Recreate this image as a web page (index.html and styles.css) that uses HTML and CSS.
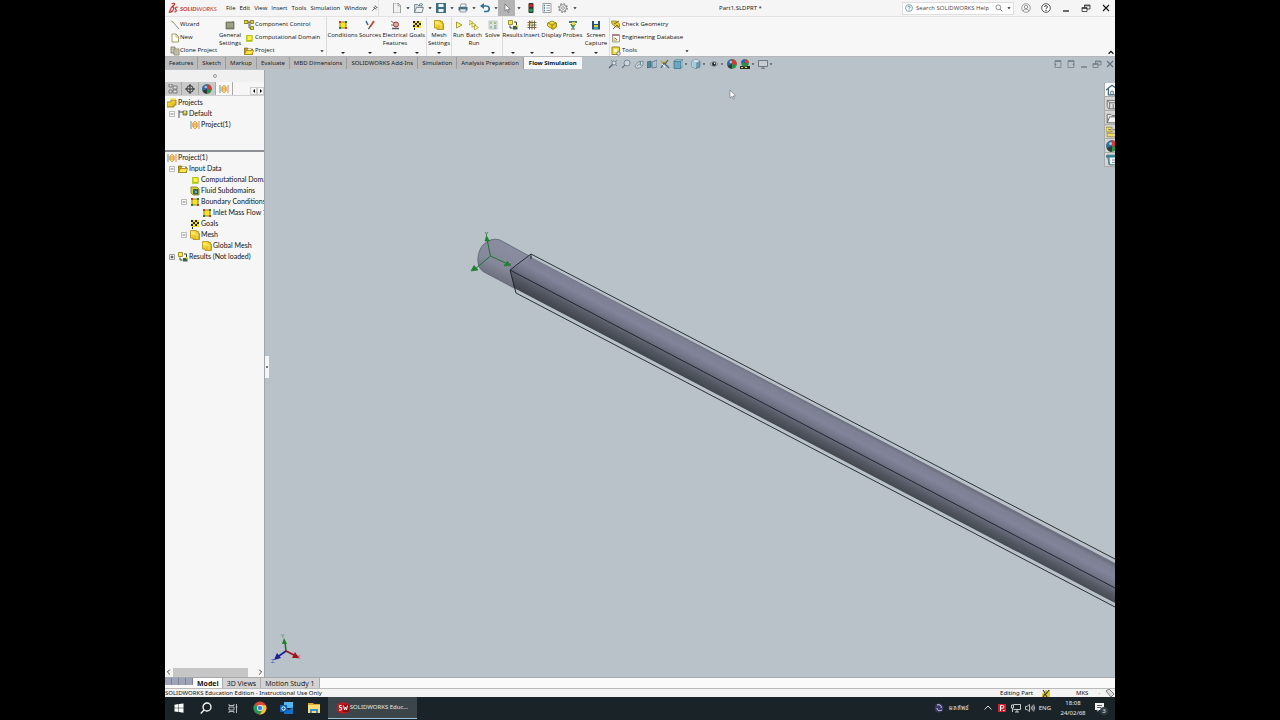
FILE: index.html
```html
<!DOCTYPE html>
<html lang="en">
<head>
<meta charset="utf-8">
<title>Part1.SLDPRT - SOLIDWORKS</title>
<link rel="stylesheet" href="styles.css">
</head>
<body>
<svg class="sprite" aria-hidden="true">
  <defs>
    <linearGradient id="gold" x1="0" y1="0" x2="1" y2="1"><stop offset="0" stop-color="#fff04a"/><stop offset="1" stop-color="#d9a90c"/></linearGradient>
    <linearGradient id="tube" gradientUnits="userSpaceOnUse" x1="800" y1="398" x2="783" y2="430">
      <stop offset="0" stop-color="#6d7080"/><stop offset=".08" stop-color="#7d7f92"/><stop offset=".3" stop-color="#82849a"/><stop offset=".5" stop-color="#727587"/><stop offset=".75" stop-color="#545863"/><stop offset="1" stop-color="#41454d"/>
    </linearGradient>
    <linearGradient id="cap" gradientUnits="userSpaceOnUse" x1="498" y1="240" x2="482" y2="274">
      <stop offset="0" stop-color="#8a8d9f"/><stop offset=".6" stop-color="#85889a"/><stop offset="1" stop-color="#696d7b"/>
    </linearGradient>
  </defs>
  <symbol id="caret" viewBox="0 0 10 10"><path d="M3 4h4L5 6.500z" fill="#222"/></symbol>
  <symbol id="wand" viewBox="0 0 10 10"><path d="M2 1l7 8" stroke="#8b8c7c" stroke-width="1"/><path d="M1 1l2 1" stroke="#c6bd50"/></symbol>
  <symbol id="page" viewBox="0 0 10 10"><path d="M2 1h4l2.500 2.500V9H2z" fill="#fffff0" stroke="#8a8750" stroke-width=".8"/><path d="M6 1v3h2.500" fill="none" stroke="#8a8750" stroke-width=".6"/></symbol>
  <symbol id="clone" viewBox="0 0 10 10"><path d="M1 1h4v6H1z" fill="#c9c9b4" stroke="#77775c" stroke-width=".8"/><path d="M4 3h5v6H4z" fill="#dcdcc8" stroke="#77775c" stroke-width=".8"/><path d="M5 5h3M5 7h3" stroke="#77775c" stroke-width=".6"/></symbol>
  <symbol id="settings" viewBox="0 0 10 10"><path d="M1 2h8v7H1z" fill="#8b8e70" stroke="#5c5e50" stroke-width=".7"/><path d="M2 4h6M2 6h6" stroke="#c3c4ac" stroke-width=".7"/><path d="M6 2l3-1v2z" fill="#777"/></symbol>
  <symbol id="branch" viewBox="0 0 10 10"><path d="M2 2h4M5 2v6h2M5 5h2" fill="none" stroke="#444" stroke-width=".8"/><path d="M0 .5h4v3H0zM6.500 .5h3v3h-3zM6.500 6.500h3v3h-3z" fill="#e2cd29" stroke="#655d19" stroke-width=".7"/></symbol>
  <symbol id="cube" viewBox="0 0 10 10"><path d="M2 2h6.500v7H2z" fill="#b5d93c"/><path d="M3 2.500h5v5H3z" fill="#fff23e" stroke="#b2b41d" stroke-width=".9"/></symbol>
  <symbol id="folder" viewBox="0 0 10 10"><path d="M.5 8.500V2h3l1 1h4v5.500z" fill="#c99c17" stroke="#77610f" stroke-width=".7"/><path d="M.5 8.500L2.500 4.500h7.200L8 8.500z" fill="#ffe347" stroke="#8e740c" stroke-width=".6"/><path d="M4 3.500h3" stroke="#fff"/></symbol>
  <symbol id="bound" viewBox="0 0 10 10"><path d="M2 2h6v6H2z" fill="#f8e329" stroke="#8a861b"/><path d="M1 1h2v2H1zM7 7h2v2H7z" fill="#c8391d"/><path d="M7 1h2v2H7zM1 7h2v2H1z" fill="#34762e"/></symbol>
  <symbol id="brush" viewBox="0 0 10 10"><path d="M9 1L5 7" stroke="#c44a2a" stroke-width="1.800"/><path d="M1 1l2 4" stroke="#3868a8" stroke-width="1.500"/><path d="M6 5L4 9.500l-1-1z" fill="#333"/></symbol>
  <symbol id="electric" viewBox="0 0 10 10"><path d="M1 1l3 2M1 5h3" stroke="#7f6c65"/><circle cx="6" cy="4.500" r="2.500" fill="#d7b0a2" stroke="#a33a2e"/><path d="M2 8.500h7" stroke="#5a5a63" stroke-width="1.500"/></symbol>
  <symbol id="flag" viewBox="0 0 10 10"><path d="M1 1h8v7H3v2H2z" fill="#f3dc22"/><path d="M1 1h2v2H1zM5 1h2v2H5zM3 3h2v2H3zM7 3h2v2H7zM1 5h2v2H1zM5 5h2v2H5zM2 8h1v2H2z" fill="#24261f"/></symbol>
  <symbol id="mesh" viewBox="0 0 10 10"><path d="M.5 .5h6v1h2v2h1v6H3V8H.5z" fill="url(#gold)" stroke="#ac8c12" stroke-width=".8"/><path d="M3 4h4v5M1 3h4" fill="none" stroke="#fff38b" stroke-width=".8"/></symbol>
  <symbol id="play" viewBox="0 0 10 10"><path d="M2.500 2v6L8 5z" fill="#fff66b" stroke="#9b972b" stroke-width=".9"/></symbol>
  <symbol id="batch" viewBox="0 0 10 10"><path d="M0 0v5l4-2.500zM3 2.500v5L7 5zM5.500 5v5l4-2.500z" fill="#fff98b" stroke="#a8a23c" stroke-width=".8"/></symbol>
  <symbol id="calc" viewBox="0 0 10 10"><path d="M1 1h8v8H1z" fill="#dde5df" stroke="#a2b1aa" stroke-width=".6"/><path d="M2 3h2M6 3h2M2 7h2M6 6h2M6 8h2" stroke="#6a9187"/><path d="M6 3h2" stroke="#c5b63b"/></symbol>
  <symbol id="results" viewBox="0 0 10 10"><path d="M.5 .5h4v4h-4z" fill="#ffe746" stroke="#87801d" stroke-width=".8"/><path d="M6 2h2.500v3M2 5.500V8h2.500" fill="none" stroke="#3b443c" stroke-width="1"/><path d="M5 6h4.500v3.500H5z" fill="#326647"/><path d="M7 5h2.500v3z" fill="#ead226"/></symbol>
  <symbol id="gridicon" viewBox="0 0 10 10"><path d="M2.500 .5v9M5 .5v9M7.500 .5v9M.5 2.500h9M.5 5h9M.5 7.500h9" stroke="#59613d" stroke-width=".9"/><path d="M3 3h2v2H3z" fill="#e4cc31"/><path d="M2 2h2M6 7.500h2" stroke="#ba4c2b"/></symbol>
  <symbol id="display" viewBox="0 0 10 10"><path d="M.5 3L5 1l4.500 2v4L6 9.500.5 6z" fill="url(#gold)" stroke="#7b841b" stroke-width=".8"/><path d="M1 3l4 2 4-2M5 5v4" fill="none" stroke="#766c18" stroke-width=".7"/></symbol>
  <symbol id="probe" viewBox="0 0 10 10"><path d="M1 1h8v2H1z" fill="#427f84"/><path d="M2 4h6L5 9z" fill="#46985a"/><path d="M4 2h3v3H4z" fill="#ead74f"/><path d="M3 9h4" stroke="#4d695a"/></symbol>
  <symbol id="floppy" viewBox="0 0 10 10"><path d="M0 0h10v10H0z" fill="#3d6e88"/><path d="M2.500 1h5v3h-5zM2.500 6h5v3h-5z" fill="#eef3f5"/></symbol>
  <symbol id="capture" viewBox="0 0 10 10"><path d="M1 1h8v8.500H1z" fill="#2a4f71"/><path d="M3 1h4v3H3z" fill="#edf4f7"/><path d="M3 5h4v2H3z" fill="#e9cc34"/><path d="M3 7h4v2H3z" fill="#3f9ec2"/></symbol>
  <symbol id="check" viewBox="0 0 10 10"><path d="M.5 1h5l3 3v3H5L1 4z" fill="#e5cf28" stroke="#7b7628" stroke-width=".7"/><path d="M2 9l4-4 3 4M3 4l5-3" fill="none" stroke="#8f5930" stroke-width="1"/></symbol>
  <symbol id="engdb" viewBox="0 0 10 10"><path d="M1.500 2h7v7h-7z" fill="#fff" stroke="#8a8888" stroke-width=".8"/><path d="M1 1h7.500v2H1z" fill="#a6848a"/><path d="M3 4v4h3" fill="none" stroke="#b9ae2c"/><path d="M4 5l2 2" stroke="#cc4e41"/></symbol>
  <symbol id="tools" viewBox="0 0 10 10"><path d="M1 1h7.500v7.500H1z" fill="#f2df43" stroke="#877a1f" stroke-width=".9"/><path d="M3 3h3v3H3z" fill="#fffbb1"/><circle cx="7.500" cy="7.500" r="1.800" fill="#dcdce0" stroke="#675e80" stroke-width=".7"/></symbol>
  <symbol id="doc" viewBox="0 0 10 10"><path d="M1.500 0h4.500l2.500 2.500V10H1.500z" fill="#f1f1f1" stroke="#7d7f80" stroke-width=".7"/><path d="M6 0v3h2.500" fill="none" stroke="#7d7f80" stroke-width=".6"/></symbol>
  <symbol id="open" viewBox="0 0 10 10"><path d="M.5 9V1.500h3l1 1h3.500V9z" fill="#d6dade" stroke="#596b77" stroke-width=".7"/><path d="M.5 9.500l2-5h7L8 9.500z" fill="#eceeef" stroke="#596b77" stroke-width=".7"/><path d="M5 3c0-3 3-3 4-1" fill="none" stroke="#367c93"/></symbol>
  <symbol id="printer" viewBox="0 0 10 10"><path d="M3 1h5v3H2z" fill="#fff" stroke="#657481" stroke-width=".7"/><path d="M.5 4h9v3.500h-9z" fill="#486d82"/><path d="M2 6h6v3H2z" fill="#e4e9ec" stroke="#61727d" stroke-width=".6"/></symbol>
  <symbol id="undo" viewBox="0 0 10 10"><path d="M2 3h4.500a2.700 2.700 0 0 1 0 5.500H4" fill="none" stroke="#2f7397" stroke-width="1.700"/><path d="M4 0v6L0 3z" fill="#2f7397"/></symbol>
  <symbol id="pointer" viewBox="0 0 10 10"><path d="M3 1v7l1.700-1.500L6 9.500l1-.5-1.200-2.700H8z" fill="#fff" stroke="#54585e" stroke-width=".6"/></symbol>
  <symbol id="traffic" viewBox="0 0 10 10"><rect x="2.500" width="5" height="10" rx="1" fill="#2e3532"/><circle cx="5" cy="2.500" r="1.700" fill="#df2822"/><circle cx="5" cy="7.300" r="1.700" fill="#23a34c"/></symbol>
  <symbol id="list" viewBox="0 0 10 10"><path d="M1 .5h8v9H1z" fill="#fff" stroke="#6f777d" stroke-width=".7"/><path d="M2 2.500h1M2 5h1M2 7.500h1" stroke="#2c7894" stroke-width="1.400"/><path d="M4.500 2.500H8M4.500 5H8M4.500 7.500H8" stroke="#8a929a" stroke-width=".9"/></symbol>
  <symbol id="gear" viewBox="0 0 10 10"><circle cx="5" cy="5" r="4.200" fill="none" stroke="#858585" stroke-width="1.400" stroke-dasharray="1.700 1.600"/><circle cx="5" cy="5" r="3.400" fill="#f5f5f5" stroke="#777" stroke-width=".8"/><circle cx="5" cy="5" r="1.400" fill="none" stroke="#777" stroke-width=".7"/></symbol>
  <symbol id="pin" viewBox="0 0 10 10"><path d="M5 2l3 3M1.500 8.500L5 5M3 3.500L6.500 7M4 4.500L6 2.500M5.500 6L7.500 4" stroke="#4d4d4d" stroke-width="1" fill="none"/></symbol>
  <symbol id="lens" viewBox="0 0 10 10"><circle cx="4.200" cy="4.200" r="3" fill="none" stroke="#555" stroke-width=".8"/><path d="M6.500 6.500L9 9" stroke="#555" stroke-width=".9"/></symbol>
  <symbol id="qmark" viewBox="0 0 10 10"><circle cx="5" cy="5" r="4.300" fill="#fff" stroke="currentColor" stroke-width=".7"/><path d="M3.700 4a1.300 1.300 0 1 1 2 1c-.7.500-.7.600-.7 1.300M5 7v1" fill="none" stroke="currentColor" stroke-width=".9"/></symbol>
  <symbol id="user" viewBox="0 0 10 10"><circle cx="5" cy="5" r="4.300" fill="none" stroke="#777" stroke-width=".7"/><circle cx="5" cy="4" r="1.700" fill="none" stroke="#777" stroke-width=".7"/><path d="M2 8c1-2.500 5-2.500 6 0" fill="none" stroke="#777" stroke-width=".7"/></symbol>
  <symbol id="min" viewBox="0 0 10 10"><path d="M2 8h6" stroke="currentColor" stroke-width="1.200"/></symbol>
  <symbol id="restore" viewBox="0 0 10 10"><path d="M1 4.500h5v4H1zM3.500 4.500V2H9v4H6M1 5.500h5M3.500 2.800H9" fill="none" stroke="currentColor" stroke-width=".7"/></symbol>
  <symbol id="close" viewBox="0 0 10 10"><path d="M2 2l6 6M8 2L2 8" stroke="currentColor" stroke-width="1.100"/></symbol>
  <symbol id="pane-l" viewBox="0 0 10 10"><path d="M2 2h6v6.500H2z" fill="none" stroke="#6d757e" stroke-width=".7"/><path d="M2 2h6" stroke="#6d757e" stroke-width="1.300"/><path d="M2 4v3l1.500-1.500z" fill="#6d757e"/></symbol>
  <symbol id="pane-r" viewBox="0 0 10 10"><path d="M2 2h6v6.500H2z" fill="none" stroke="#6d757e" stroke-width=".7"/><path d="M2 2h6" stroke="#6d757e" stroke-width="1.300"/><path d="M8 4v3L6.500 5.500z" fill="#6d757e"/></symbol>
  <symbol id="zoomfit" viewBox="0 0 10 10"><circle cx="6" cy="4" r="2" fill="#dbe4ec" stroke="#5b6f84" stroke-width=".8"/><path d="M4.500 5.500L1 9" stroke="#48627a" stroke-width="1.200"/><path d="M3 1l1 1M9 1L8 2M9 7L8 6" fill="none" stroke="#637180" stroke-width=".8"/></symbol>
  <symbol id="zoomarea" viewBox="0 0 10 10"><circle cx="6" cy="4" r="3" fill="#ccd6df" stroke="#6a7886" stroke-width=".8"/><path d="M4 6L1 9" stroke="#6a7886" stroke-width="1.200"/></symbol>
  <symbol id="prev" viewBox="0 0 10 10"><path d="M1 7l3-4 5-1v4L6 9H2z" fill="#d3d9dc" stroke="#637880" stroke-width=".7"/><path d="M3 7l4-3M6 2l1 5" stroke="#56878f" stroke-width=".9"/></symbol>
  <symbol id="section" viewBox="0 0 10 10"><path d="M0 3l4-1v6l-4 1z" fill="#51889a" stroke="#36586a" stroke-width=".6"/><path d="M5 3l5-2v7l-5 1z" fill="#a8c3ce" stroke="#36586a" stroke-width=".6"/></symbol>
  <symbol id="dynamic" viewBox="0 0 10 10"><path d="M0 1l4 2 3-2v4H2z" fill="#d2a844"/><path d="M1 9l3-5 5 5M8 1L5 5l4 4" fill="none" stroke="#3d6986" stroke-width="1.200"/><path d="M2 5l3 3" stroke="#fff"/></symbol>
  <symbol id="orient" viewBox="0 0 10 10"><path d="M1 2h7v7.500H1z" fill="#68a9bf" stroke="#316c84" stroke-width=".7"/><path d="M1 2l2-1.500h7L8 2zM8 2l2-1.500V7L8 9z" fill="#b4d1dc" stroke="#4a7788" stroke-width=".5"/></symbol>
  <symbol id="shaded" viewBox="0 0 10 10"><path d="M1 2l4-1.500L9 2v6L5 9.500 1 8z" fill="#6e9fb2" stroke="#42626f" stroke-width=".6"/><path d="M1 2l4 1.500L9 2 5 .5z" fill="#d4e5ec"/><path d="M5 3.500v6L1 8V2z" fill="#a7cbd8"/></symbol>
  <symbol id="eye" viewBox="0 0 10 10"><path d="M1 5c2-3 6-3 8 0-2 3-6 3-8 0z" fill="#b8c1c8" stroke="#6a7179" stroke-width=".7"/><circle cx="5" cy="5" r="2" fill="#262d35"/><circle cx="5.500" cy="4.200" r=".7" fill="#fff"/></symbol>
  <symbol id="ball" viewBox="0 0 10 10"><circle cx="5" cy="5" r="4.800" fill="#2b9048"/><path d="M5 5V.2A4.800 4.800 0 0 0 .5 6.800z" fill="#3169aa"/><path d="M5 5V.2a4.800 4.800 0 0 1 4.700 5.700z" fill="#cf3d35"/><path d="M5 5L.5 6.800A4.800 4.800 0 0 0 5 9.800z" fill="#34373b"/><circle cx="3.800" cy="3" r="1.300" fill="#fff" opacity=".6"/></symbol>
  <symbol id="scene" viewBox="0 0 10 10"><path d="M0 7h10v3H0z" fill="#252a27"/><path d="M1 8h2v1H1zM5 8h2v1H5z" fill="#efe24a"/><circle cx="5" cy="4" r="3.800" fill="#328c4b"/><path d="M5 4V.2A3.800 3.800 0 0 1 8.800 4z" fill="#d04438"/><path d="M5 4V.2A3.800 3.800 0 0 0 1.200 4z" fill="#3262a0"/></symbol>
  <symbol id="monitor" viewBox="0 0 10 10"><path d="M.5 1.500h9v6h-9zM3 9.300h4M5 7.500v2" fill="#c5ccd2" stroke="currentColor" stroke-width=".8"/></symbol>
  <symbol id="home" viewBox="0 0 10 10"><path d="M0 5l5-4 5 4M2 4v5h6V4" fill="#fff" stroke="#3a6573" stroke-width="1"/><path d="M4 9V6h2v3" fill="none" stroke="#3a6573" stroke-width=".7"/></symbol>
  <symbol id="library" viewBox="0 0 10 10"><path d="M1 2h7l1 2v5H2L1 7zM1 2l2 2h6M3 4v5M6 5v4" fill="#ddd" stroke="#666" stroke-width=".7"/></symbol>
  <symbol id="explore" viewBox="0 0 10 10"><path d="M1 9V2h3l1 1h4v6zM1 9l2-5h7" fill="#f4f4f4" stroke="#666" stroke-width=".8"/></symbol>
  <symbol id="palette" viewBox="0 0 10 10"><path d="M0 1h5v4H0zM1 6h8v3H1z" fill="#efdc62" stroke="#8d8347" stroke-width=".7"/><path d="M6 3h4M2 3h2" stroke="#777"/></symbol>
  <symbol id="props" viewBox="0 0 10 10"><path d="M1 1h9v8H3z" fill="#eff4f5" stroke="#377184" stroke-width=".8"/><path d="M0 1h10v2H0zM2 3h1v6H2z" fill="#377f95"/><path d="M5 5h4M5 7h4" stroke="#69808a" stroke-width=".7"/></symbol>
  <symbol id="ftree" viewBox="0 0 10 10"><path d="M1 0h3v3H1zM5 2h4v3H5zM1 6h3v3H1zM5 6h4v3H5z" fill="#dcdcdc" stroke="#666" stroke-width=".8"/></symbol>
  <symbol id="target" viewBox="0 0 10 10"><circle cx="5" cy="5" r="3.300" fill="none" stroke="#222" stroke-width=".9"/><path d="M5 0v10M0 5h10" stroke="#222" stroke-width=".9"/></symbol>
  <symbol id="flow" viewBox="0 0 10 10"><path d="M1 1v8" stroke="#79a9a3" stroke-width="1.200"/><path d="M9 1v8" stroke="#df9d76" stroke-width="1.200"/><path d="M3 3l2-2 2 2v4L5 9 3 7z" fill="#ffe268" stroke="#cf9839" stroke-width=".8"/><path d="M2 4h6M2 6h6" stroke="#d97f55" stroke-width=".7"/></symbol>
  <symbol id="projects" viewBox="0 0 10 10"><path d="M0 4h4V2h5v5H7v2H0z" fill="url(#gold)" stroke="#94791a" stroke-width=".8"/><path d="M3 1h6" stroke="#f7e33b" stroke-width="1.200"/></symbol>
  <symbol id="config" viewBox="0 0 10 10"><path d="M1 1v8M1 3h4" stroke="#444" stroke-width=".9"/><path d="M5 2h4v4H5z" fill="#c1bd32" stroke="#555d31" stroke-width=".7"/><path d="M6 3h2" stroke="#fff"/></symbol>
  <symbol id="fluid" viewBox="0 0 10 10"><path d="M1 1h6l2 2v6H3L1 7z" fill="#d5d532" stroke="#7c8128" stroke-width=".8"/><path d="M3.500 3.500H8V8H3.500z" fill="#276d7b" stroke="#233" stroke-width=".6"/><circle cx="6" cy="6" r="1.200" fill="#74b8a6"/></symbol>
  <symbol id="minus" viewBox="0 0 10 10"><path d="M2.500 2.500h5v5h-5z" fill="#fff" stroke="#aaa" stroke-width=".8"/><path d="M3.500 5h3" stroke="#777"/></symbol>
  <symbol id="plus" viewBox="0 0 10 10"><path d="M2.500 2.500h5v5h-5z" fill="#fff" stroke="#888" stroke-width=".8"/><path d="M3.500 5h3M5 3.500v3" stroke="#333"/></symbol>
  <symbol id="rebuild" viewBox="0 0 10 10"><path d="M1 5h3V2h2v3l3-4v8H1z" fill="#e5c72b"/><path d="M2 2l2 3M8 2L5 6M2 9l2-3 2 3" stroke="#31352e" stroke-width="1.100" fill="none"/></symbol>
  <symbol id="tag" viewBox="0 0 10 10"><path d="M1 3l3-2 5 5-3 3z" fill="#ddd" stroke="#666" stroke-width=".8"/></symbol>
</svg>

<div class="desktop">
  <header class="titlebar">
    <div class="brand">
      <svg class="mark" viewBox="0 0 12 12"><path d="M4 1.500c2-1.200 4-.7 3 1L4.500 4.500M3 5h3c1 1 0 4-3 5.500H1.500L3.500 6M10.500 5C8.500 4.500 7.500 6 8.500 7.500S9 10.500 7 10.200" fill="none" stroke="#c8332b" stroke-width="1.300"/></svg>
      <span class="brand-name"><b>SOLID</b>WORKS</span>
    </div>
    <nav class="menu">
      <button>File</button><button>Edit</button><button>View</button><button>Insert</button><button>Tools</button><button>Simulation</button><button>Window</button>
      <button aria-label="Pin menu"><svg class="ic8"><use href="#pin"/></svg></button>
    </nav>
    <div class="quick">
      <button aria-label="New"><svg class="ic10"><use href="#doc"/></svg></button><button aria-label="New options"><svg class="ic8"><use href="#caret"/></svg></button>
      <button aria-label="Open"><svg class="ic10"><use href="#open"/></svg></button><button aria-label="Open options"><svg class="ic8"><use href="#caret"/></svg></button>
      <button aria-label="Save"><svg class="ic10"><use href="#floppy"/></svg></button><button aria-label="Save options"><svg class="ic8"><use href="#caret"/></svg></button>
      <button aria-label="Print"><svg class="ic10"><use href="#printer"/></svg></button><button aria-label="Print options"><svg class="ic8"><use href="#caret"/></svg></button>
      <button aria-label="Undo"><svg class="ic10"><use href="#undo"/></svg></button><button aria-label="Undo options"><svg class="ic8"><use href="#caret"/></svg></button>
      <button class="select-on" aria-label="Select"><svg class="ic10"><use href="#pointer"/></svg></button><button class="slim" aria-label="Select options"><svg class="ic8"><use href="#caret"/></svg></button>
      <button class="wide" aria-label="Rebuild"><svg class="ic10"><use href="#traffic"/></svg></button>
      <button class="wide" aria-label="File properties"><svg class="ic10"><use href="#list"/></svg></button>
      <button class="wide" aria-label="Options"><svg class="ic10"><use href="#gear"/></svg></button><button class="slim" aria-label="More options"><svg class="ic8"><use href="#caret"/></svg></button>
    </div>
    <h1 class="doc-title">Part1.SLDPRT *</h1>
    <label class="search"><svg class="ic8 teal"><use href="#qmark"/></svg><input type="text" placeholder="Search SOLIDWORKS Help" aria-label="Search SOLIDWORKS Help"><svg class="ic8"><use href="#lens"/></svg><svg class="ic8"><use href="#caret"/></svg></label>
    <div class="winctl">
      <button aria-label="Account"><svg class="ic10"><use href="#user"/></svg></button><button aria-label="Help"><svg class="ic10"><use href="#qmark"/></svg></button><button aria-label="Minimize"><svg class="ic10"><use href="#min"/></svg></button><button aria-label="Restore"><svg class="ic10"><use href="#restore"/></svg></button><button aria-label="Close"><svg class="ic10"><use href="#close"/></svg></button>
    </div>
  </header>

  <section class="ribbon">
    <div class="stack"><button><svg class="ic10"><use href="#wand"/></svg>Wizard</button><button><svg class="ic10"><use href="#page"/></svg>New</button><button><svg class="ic10"><use href="#clone"/></svg>Clone Project</button></div>
    <button class="tool"><svg class="ic10"><use href="#settings"/></svg><span>General Settings</span></button>
    <div class="stack"><button><svg class="ic10"><use href="#branch"/></svg>Component Control</button><button><svg class="ic10"><use href="#cube"/></svg>Computational Domain</button><button><svg class="ic10"><use href="#folder"/></svg>Project<svg class="ic8 end"><use href="#caret"/></svg></button></div>
    <button class="tool rule drop"><svg class="ic10"><use href="#bound"/></svg><span>Conditions</span></button>
    <button class="tool drop"><svg class="ic10"><use href="#brush"/></svg><span>Sources</span></button>
    <button class="tool drop"><svg class="ic10"><use href="#electric"/></svg><span>Electrical Features</span></button>
    <button class="tool drop"><svg class="ic10"><use href="#flag"/></svg><span>Goals</span></button>
    <button class="tool rule drop"><svg class="ic10"><use href="#mesh"/></svg><span>Mesh Settings</span></button>
    <button class="tool rule"><svg class="ic10"><use href="#play"/></svg><span>Run</span></button>
    <button class="tool"><svg class="ic10"><use href="#batch"/></svg><span>Batch Run</span></button>
    <button class="tool drop"><svg class="ic10"><use href="#calc"/></svg><span>Solve</span></button>
    <button class="tool rule drop"><svg class="ic10"><use href="#results"/></svg><span>Results</span></button>
    <button class="tool drop"><svg class="ic10"><use href="#gridicon"/></svg><span>Insert</span></button>
    <button class="tool drop"><svg class="ic10"><use href="#display"/></svg><span>Display</span></button>
    <button class="tool drop"><svg class="ic10"><use href="#probe"/></svg><span>Probes</span></button>
    <button class="tool drop"><svg class="ic10"><use href="#capture"/></svg><span>Screen Capture</span></button>
    <div class="stack rule"><button><svg class="ic10"><use href="#check"/></svg>Check Geometry</button><button><svg class="ic10"><use href="#engdb"/></svg>Engineering Database</button><button><svg class="ic10"><use href="#tools"/></svg>Tools<svg class="ic8 end"><use href="#caret"/></svg></button></div>
    <button class="collapse" aria-label="Collapse ribbon"><svg class="ic8" viewBox="0 0 10 10"><path d="M2 6l3-3 3 3" fill="none" stroke="#111" stroke-width="1.600"/></svg></button>
  </section>

  <div class="tabrow">
    <nav class="tabs">
      <button>Features</button><button>Sketch</button><button>Markup</button><button>Evaluate</button><button>MBD Dimensions</button><button>SOLIDWORKS Add-Ins</button><button>Simulation</button><button>Analysis Preparation</button><button class="on">Flow Simulation</button>
    </nav>
    <div class="hud">
      <button aria-label="Zoom to fit"><svg class="ic10"><use href="#zoomfit"/></svg></button><button aria-label="Zoom to area"><svg class="ic10"><use href="#zoomarea"/></svg></button><button aria-label="Previous view"><svg class="ic10"><use href="#prev"/></svg></button><button aria-label="Section view"><svg class="ic10"><use href="#section"/></svg></button><button aria-label="Annotation views"><svg class="ic10"><use href="#dynamic"/></svg></button><button class="dd" aria-label="View orientation"><svg class="ic10"><use href="#orient"/></svg><svg class="ic6"><use href="#caret"/></svg></button><button class="dd" aria-label="Display style"><svg class="ic10"><use href="#shaded"/></svg><svg class="ic6"><use href="#caret"/></svg></button><button class="dd" aria-label="Hide items"><svg class="ic10"><use href="#eye"/></svg><svg class="ic6"><use href="#caret"/></svg></button><button aria-label="Appearance"><svg class="ic10"><use href="#ball"/></svg></button><button class="dd" aria-label="Scene"><svg class="ic10"><use href="#scene"/></svg><svg class="ic6"><use href="#caret"/></svg></button><button class="dd" aria-label="View settings"><svg class="ic10"><use href="#monitor"/></svg><svg class="ic6"><use href="#caret"/></svg></button>
    </div>
    <div class="docctl">
      <button aria-label="Tile left"><svg class="ic10"><use href="#pane-l"/></svg></button><button aria-label="Tile right"><svg class="ic10"><use href="#pane-r"/></svg></button><button aria-label="Minimize document"><svg class="ic10"><use href="#min"/></svg></button><button aria-label="Restore document"><svg class="ic10"><use href="#restore"/></svg></button><button aria-label="Close document"><svg class="ic10"><use href="#close"/></svg></button>
    </div>
  </div>

  <main class="work">
    <aside class="panel">
      <div class="grip"><i></i></div>
      <div class="ptabs">
        <button aria-label="Feature tree"><svg class="ic10"><use href="#ftree"/></svg></button><button aria-label="Dimensions"><svg class="ic10"><use href="#target"/></svg></button><button aria-label="Display manager"><svg class="ic10"><use href="#ball"/></svg></button><button class="on" aria-label="Flow analysis"><svg class="ic10"><use href="#flow"/></svg></button>
        <span class="steps"><button aria-label="Previous"><svg class="ic6" viewBox="0 0 6 6"><path d="M4 1v4L2 3z"/></svg></button><button aria-label="Next"><svg class="ic6" viewBox="0 0 6 6"><path d="M2 1v4l2-2z"/></svg></button></span>
      </div>
      <ul class="tree top">
        <li><svg class="ic10"><use href="#projects"/></svg>Projects</li>
        <li><svg class="ic10"><use href="#minus"/></svg><svg class="ic10"><use href="#config"/></svg>Default</li>
        <li class="l2"><svg class="ic10"><use href="#flow"/></svg>Project(1)</li>
      </ul>
      <div class="splitter"></div>
      <ul class="tree">
        <li><svg class="ic10"><use href="#flow"/></svg>Project(1)</li>
        <li><svg class="ic10"><use href="#minus"/></svg><svg class="ic10"><use href="#folder"/></svg>Input Data</li>
        <li class="l2"><svg class="ic10"><use href="#cube"/></svg>Computational Domain</li>
        <li class="l2"><svg class="ic10"><use href="#fluid"/></svg>Fluid Subdomains</li>
        <li class="l1"><svg class="ic10"><use href="#minus"/></svg><svg class="ic10"><use href="#bound"/></svg>Boundary Conditions</li>
        <li class="l3"><svg class="ic10"><use href="#bound"/></svg>Inlet Mass Flow 1</li>
        <li class="l2"><svg class="ic10"><use href="#flag"/></svg>Goals</li>
        <li class="l1"><svg class="ic10"><use href="#minus"/></svg><svg class="ic10"><use href="#mesh"/></svg>Mesh</li>
        <li class="l3"><svg class="ic10"><use href="#mesh"/></svg>Global Mesh</li>
        <li><svg class="ic10"><use href="#plus"/></svg><svg class="ic10"><use href="#results"/></svg>Results (Not loaded)</li>
      </ul>
      <div class="hscroll"><svg class="ic8" viewBox="0 0 10 10"><path d="M6 2L3 5l3 3" fill="none" stroke="#333" stroke-width="1.200"/></svg><i></i><svg class="ic8" viewBox="0 0 10 10"><path d="M4 2l3 3-3 3" fill="none" stroke="#333" stroke-width="1.200"/></svg></div>
    </aside>
    <section class="view">
      <svg class="scene" viewBox="265 70 850 607" preserveAspectRatio="xMinYMin slice">
        <path d="M500 240L532 257.500 514 288 484 272C475 267 477 252 483 245Q491 237 500 240z" fill="url(#cap)"/>
        <path d="M531 257L1115 563V603L514 288 510 270z" fill="url(#tube)"/>
        <path d="M500 240L532 257.500M484 272L514 288M484 272C475 267 477 252 483 245Q491 237 500 240" fill="none" stroke="#5d606e" stroke-width=".8"/>
        <path d="M531 254L1115 559M516 293L1115 607M531 254v5" fill="none" stroke="#2b3037" stroke-width="1"/>
        <path d="M1115 588L510 270 531 254M510 270l6 23" fill="none" stroke="#22262d" stroke-width="1"/>
        <g stroke="#17762a" fill="#158a25"><path d="M490.500 256L487 239M490.500 256l15 7M490.500 256L474 270" fill="none" stroke-width="1"/><path d="M485 241l1.500-5 3 5zM511 265l-7 1 3-4.500zM471 271l3-5.500 4 4.500z" stroke-width=".6"/><path d="M485 232l1.500 2 1.500-2M486.500 234v2" fill="none" stroke-width=".7"/></g>
        <g fill="none" stroke-width="1.600"><path d="M286 651l-1-9" stroke="#24712d"/><path d="M286 651l10 5" stroke="#a01420"/><path d="M286 651l-10 7" stroke="#1e1e96"/></g>
        <path d="M284 638l3 6h-5z" fill="#1c8428"/><path d="M299 658l-7 0 3-6z" fill="#a01420"/><path d="M274 660l3-7 4 5z" fill="#1e1e96"/>
        <g class="axis"><text x="281" y="638" fill="#4c8c50">Y</text><text x="297" y="659" fill="#d0303c">X</text><text x="271" y="663" fill="#3838d0">Z</text><text x="508" y="267" fill="#4a6c58">X</text></g>
        <path d="M730 90v8l2-1.700 1.300 3 1-.5-1.200-2.800h2.400z" fill="#fff" stroke="#555b62" stroke-width=".5"/>
      </svg>
      <button class="flap" aria-label="Collapse panel"><i></i></button>
      <nav class="taskpane">
        <button class="on" aria-label="Resources"><svg class="ic12"><use href="#home"/></svg></button><button aria-label="Design library"><svg class="ic12"><use href="#library"/></svg></button><button aria-label="File explorer"><svg class="ic12"><use href="#explore"/></svg></button><button aria-label="View palette"><svg class="ic12"><use href="#palette"/></svg></button><button aria-label="Appearances"><svg class="ic12"><use href="#ball"/></svg></button><button aria-label="Custom properties"><svg class="ic12"><use href="#props"/></svg></button>
      </nav>
    </section>
  </main>

  <nav class="sheets"><span class="navs"><i></i><i></i><i></i><i></i></span><button class="on">Model</button><button>3D Views</button><button>Motion Study 1</button></nav>
  <footer class="status"><span class="edition">SOLIDWORKS Education Edition - Instructional Use Only</span><span>Editing Part</span><svg class="ic10"><use href="#rebuild"/></svg><span class="units">MKS</span><span class="dot">·</span><svg class="ic10"><use href="#tag"/></svg></footer>

  <div class="taskbar">
    <div class="pins">
      <button aria-label="Start"><svg class="ic10" viewBox="0 0 10 10"><path d="M.5 1.700l4-.6v3.700h-4zM5 1l4.500-.6v4.400H5zM.5 5.300h4V9l-4-.6zM5 5.300h4.500v4.400L5 9z" fill="#fff"/></svg></button>
      <button aria-label="Search"><svg class="ic12" viewBox="0 0 12 12"><circle cx="7" cy="5" r="4" fill="none" stroke="#fff" stroke-width="1.300"/><path d="M4 8L.8 11.500" stroke="#fff" stroke-width="1.300"/></svg></button>
      <button aria-label="Task view"><svg class="ic10" viewBox="0 0 10 10"><path d="M1 1v1.500h5V1M1 4h5v3H1zM1 10V8.500h5V10M8.500 1v9M7.500 4h2" fill="none" stroke="#c5cacc" stroke-width=".9"/></svg></button>
      <button aria-label="Chrome"><svg class="ic14" viewBox="0 0 14 14"><circle cx="7" cy="7" r="6.500" fill="#dd4a37"/><path d="M7 7L1.400 3.800A6.500 6.500 0 0 0 7 13.500l3-5.200z" fill="#239955"/><path d="M7 4.200h5.800a6.500 6.500 0 0 1-5.800 9.300L9.800 8z" fill="#f5c42b"/><circle cx="7" cy="7" r="3" fill="#fff"/><circle cx="7" cy="7" r="2.300" fill="#3f7fe0"/></svg></button>
      <button aria-label="Outlook"><svg class="ic14" viewBox="0 0 14 14"><path d="M4 1h9v6H4z" fill="#55b7ee"/><path d="M4 6l5 3 4-3v7H4z" fill="#1670c4"/><path d="M0 4h7v7H0z" fill="#0d62b7"/><circle cx="3.500" cy="7.500" r="1.700" fill="none" stroke="#fff" stroke-width="1"/></svg></button>
      <button aria-label="Files"><svg class="ic14" viewBox="0 0 14 14"><path d="M1 2h5l1 1h6v9H1z" fill="#d9a92e"/><path d="M1 4h12v8H1z" fill="#fadd78"/><path d="M3 12V8h8v4H9v-2H5v2z" fill="#3a90cf"/></svg></button>
      <button class="app"><svg class="ic12" viewBox="0 0 12 12"><path d="M0 2l6-2 6 2v8l-6 2-6-2z" fill="#c11822"/><path d="M6 2.500h6V10H6z" fill="#8c0c14"/><path d="M4.500 3.500h-2v2h2v2.500H2M6.500 3.500l1 4.500 1-3 1 3 1-4.500" fill="none" stroke="#fff" stroke-width="1"/></svg>SOLIDWORKS Educ...</button>
    </div>
    <div class="tray">
      <button class="lang-app"><svg class="ic10" viewBox="0 0 10 10"><circle cx="5" cy="5" r="4.500" fill="#3a3562"/><path d="M3 2c3-1 5 1 4 3M3 5c0 3 3 3 5 2" fill="none" stroke="#d9d8f0" stroke-width="1"/></svg>ผลลัพธ์</button>
      <button aria-label="Hidden icons"><svg class="ic10" viewBox="0 0 10 10"><path d="M1.500 6.500L5 3l3.500 3.500" fill="none" stroke="#ddd" stroke-width="1"/></svg></button>
      <button aria-label="Reader"><svg class="ic10" viewBox="0 0 10 10"><path d="M1 1h8v8H1z" fill="#d3202c"/><path d="M3.500 8V2.500h2a1.300 1.300 0 0 1 0 2.700h-2M6 7.500h1.500" fill="none" stroke="#fff"/></svg></button>
      <button aria-label="Network"><svg class="ic10" viewBox="0 0 10 10"><path d="M2.500 1.500H9.500v5H2.500M6 6.500V9M4 9h4M.5 2h2v3h-2zM1.500 5v4" fill="none" stroke="#ddd" stroke-width=".9"/></svg></button>
      <button aria-label="Volume"><svg class="ic10" viewBox="0 0 10 10"><path d="M.5 3.500H2L4.500 1.500v7L2 6.500H.5zM6 3.500q1 1.500 0 3M7.300 2.500q1.700 2.500 0 5M8.600 1.500q2 3.500 0 7" fill="none" stroke="#ddd" stroke-width=".8"/></svg></button>
      <span class="lang">ENG</span>
      <time class="clock"><span>18:08</span><span>24/02/68</span></time>
      <button class="notes" aria-label="Notifications"><svg class="ic10" viewBox="0 0 10 10"><path d="M0 0h9v7H4L2.500 9V7H0z" fill="#eee"/><path d="M2 2.500h5M2 4.500h4" stroke="#333" stroke-width=".8"/></svg><span class="badge">3</span></button>
    </div>
  </div>
</div>
</body>
</html>
```
FILE: styles.css
```css
* { box-sizing: border-box; }
body { margin: 0; background: #000; color: #111; font: 6px/9px "Open Sans", "Noto Sans", sans-serif; }
button { display: flex; align-items: center; justify-content: center; margin: 0; padding: 0; border: 0; background: none; color: inherit; font: inherit; white-space: nowrap; }
svg { flex: none; display: block; }
.sprite { position: absolute; width: 0; height: 0; }
.ic6 { width: 6px; height: 6px; }
.ic8 { width: 8px; height: 8px; }
.ic10 { width: 10px; height: 10px; }
.ic12 { width: 12px; height: 12px; }
.ic14 { width: 14px; height: 14px; }
.teal { color: #24606e; }

.desktop { display: flex; flex-direction: column; height: 100vh; margin: 0 165px; overflow: hidden; background: #f5f5f5; }

.titlebar { display: flex; align-items: center; height: 17px; border-bottom: 1px solid #e2e2e2; }
.brand { display: flex; align-items: center; gap: 1px; width: 58px; padding-left: 3px; color: #c8332b; font-family: Lato, sans-serif; font-style: italic; }
.mark { width: 11px; height: 12px; }
.menu { display: flex; align-items: center; gap: 4px; width: 156px; padding-left: 3px; height: 17px; border-right: 1px solid #e2e2e2; }
.quick { display: flex; align-items: center; padding-left: 12px; }
.quick button { width: 11px; height: 16px; }
.quick .select-on { width: 17px; margin-left: -3px; background: #b4b4b4; }
.quick .slim { width: 8px; }
.quick .wide { width: 16px; }
.doc-title { flex: 1; margin: 0; text-align: center; font: inherit; }
.search { display: flex; align-items: center; width: 112px; height: 13px; padding: 0 0 0 2px; gap: 2px; background: #fff; border: 1px solid #dedede; }
.search input { flex: 1; min-width: 0; padding: 0 1px; border: 0; outline: 0; background: none; font: inherit; }
.search input::placeholder { color: #444; opacity: 1; }
.winctl { display: flex; gap: 10px; padding: 0 4px 0 7px; }

.ribbon { display: grid; grid-template-columns: 53px 24px 84px 32px 24px 26px 18px 25px 14px 18px 19px 20px 19px 21px 21px 26px 82px 1fr; height: 39px; background: #f7f7f7; }
.stack { display: flex; flex-direction: column; padding: 1px 0 0 2px; }
.stack button { justify-content: flex-start; gap: 1px; height: 13px; }
.stack:first-child { padding-left: 5px; }
.stack:first-child button { gap: 0; }
.stack.rule { padding-left: 1px; }
.end { margin-left: auto; }
.tool { flex-direction: column; justify-content: flex-start; padding-top: 3px; }
.tool span { line-height: 8px; margin-top: 1px; text-align: center; white-space: normal; width: min-content; }
.rule { border-left: 1px solid #dcdcdc; }
.drop::after { content: ""; margin-top: auto; margin-bottom: 3px; border: 2px solid transparent; border-top-color: #222; border-bottom: 0; }
.collapse { justify-self: end; align-self: end; }

.tabrow { display: flex; height: 14px; background: #b9c1c9; border-top: 1px solid #b4b6b9; }
.tabs, .status, .taskbar { font-family: "Noto Sans", "Open Sans", sans-serif; }
.tabs { display: flex; }
.tabs button { height: 12px; padding: 0 4px; background: #bcbcbd; border-right: 1px solid #9b9c9e; color: #222; }
.tabs .on { padding: 0 5px; background: #f7f7f7; color: #111; font-weight: 700; border: 0; }
.hud { display: flex; align-items: center; gap: 3px; padding-left: 26px; color: #5d646c; }
.hud .dd { width: 15px; justify-content: flex-start; }
.docctl { display: flex; align-items: center; gap: 3px; margin-left: auto; color: #666e77; }

.work { display: flex; flex: 1; min-height: 0; }
.panel { display: flex; flex-direction: column; width: 100px; border-right: 1px solid #9fa5ab; background: #f6f6f6; overflow: hidden; }
.grip { display: flex; justify-content: center; align-items: center; height: 12px; background: #f0f0f0; }
.grip i { width: 4px; height: 4px; border: 1px solid #999; border-radius: 50%; }
.ptabs { display: flex; height: 14px; border-bottom: 1px solid #d0d0d0; }
.ptabs > button { width: 17px; background: #c9c9c9; border-right: 1px solid #a8a8a8; }
.ptabs > .on { background: #f8f8f8; }
.steps { display: flex; align-self: flex-end; margin-left: auto; }
.steps button { width: 7px; height: 8px; border: 1px solid #ccc; }
.tree { list-style: none; margin: 0; padding: 0 0 0 2px; font-family: Lato, "Noto Sans", sans-serif; font-size: 7px; }
.tree li { display: flex; align-items: center; gap: 1px; height: 11px; white-space: nowrap; }
.tree.top { height: 54px; padding-top: 1px; }
.tree .l1 { padding-left: 12px; }
.tree .l2 { padding-left: 23px; }
.tree .l3 { padding-left: 35px; }
.splitter { height: 2px; background: #8d9094; }
.hscroll { display: flex; align-items: center; height: 10px; margin-top: auto; }
.hscroll i { width: 75px; height: 9px; margin-right: auto; background: #c6c6c6; }

.view { flex: 1; position: relative; overflow: hidden; background: #b9c1c9; }
.scene { width: 100%; height: 100%; }
.axis { font-size: 6px; }
.flap { position: absolute; left: 0; top: 286px; width: 4px; height: 22px; background: #f5f5f5; }
.flap i { width: 2px; height: 2px; background: #777; }
.taskpane { position: absolute; right: 0; top: 13px; width: 11px; overflow: hidden; background: #d6d6d4; }
.taskpane button { width: 14px; height: 14px; border-bottom: 1px solid #aaa; border-left: 1px solid #aaa; }
.taskpane .on { background: #fafafa; }

.sheets { display: flex; height: 11px; border-top: 1px solid #a6a9ac; background: #fafafa; }
.sheets button { padding: 0 4px; background: #d3d3d3; border-right: 1px solid #aaa; font-size: 7px; }
.sheets .on { padding: 0 3px; background: #fff; font-weight: 700; }
.navs { display: flex; width: 29px; padding-right: 1px; }
.navs i { flex: 1; height: 7px; background: #9fa3b8; border-right: 1px solid #7e829a; }
.status { display: flex; align-items: center; height: 9px; border-top: 1px solid #bbb; background: #f3f3f3; overflow: hidden; }
.edition { flex: 1; }
.status .ic10 { margin-left: 8px; }
.units { margin-left: 25px; }
.dot { margin-left: 10px; }
.status .ic10:last-child { margin-left: 5px; }

.taskbar { display: flex; justify-content: space-between; height: 23px; padding-bottom: 1px; background: #1a2428; color: #e6e9ea; }
.pins, .tray { display: flex; }
.pins button { width: 27px; }
.pins .app { gap: 1px; width: 89px; margin-left: 1px; background: #3b454a; border-bottom: 1px solid #9cc4dc; }
.tray { align-items: center; gap: 4px; padding-right: 10px; }
.lang-app { gap: 5px; margin-right: 10px; }
.clock { display: flex; flex-direction: column; width: 36px; text-align: center; line-height: 10px; }
.notes { position: relative; }
.badge { position: absolute; left: 5px; top: 4px; width: 8px; height: 8px; border-radius: 50%; background: #333c40; line-height: 8px; }
```
